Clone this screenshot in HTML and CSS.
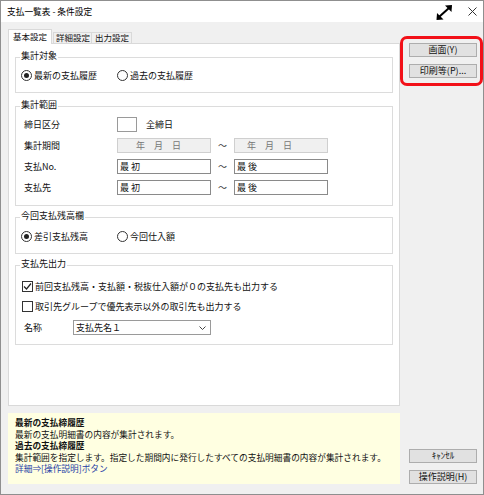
FILE: index.html
```html
<!DOCTYPE html>
<html lang="ja">
<head>
<meta charset="utf-8">
<title>支払一覧表 - 条件設定</title>
<link rel="stylesheet" href="styles.css">
</head>
<body>
<div class="win">
  <div class="titlebar">
    <span class="title">支払一覧表 - 条件設定</span>
    <div class="winctl">
      <svg class="ico-max" width="17" height="15" viewBox="0 0 17 15">
        <line x1="3.5" y1="11.5" x2="13" y2="3" stroke="#000" stroke-width="2"/>
        <polygon points="16,0 9,0.5 15.5,7" fill="#000"/>
        <polygon points="0.5,15 7.5,14.5 1,8" fill="#000"/>
      </svg>
      <svg class="ico-close" width="9" height="9" viewBox="0 0 9 9">
        <path d="M0.5 0.5 L8.5 8.5 M8.5 0.5 L0.5 8.5" stroke="#333" stroke-width="1"/>
      </svg>
    </div>
  </div>
  <div class="client">
    <div class="main">
      <div class="tabs">
        <div class="tab active">基本設定</div>
        <div class="tab">詳細設定</div>
        <div class="tab t3">出力設定</div>
      </div>
      <div class="panel">
        <div class="group g1">
          <div class="legend">集計対象</div>
          <div class="row">
            <div class="opt wide"><span class="radio on"></span>最新の支払履歴</div>
            <div class="opt"><span class="radio"></span>過去の支払履歴</div>
          </div>
        </div>
        <div class="group g2">
          <div class="legend">集計範囲</div>
          <div class="frow first">
            <div class="flabel">締日区分</div>
            <div class="sbox"></div>
            <div class="after">全締日</div>
          </div>
          <div class="frow">
            <div class="flabel">集計期間</div>
            <div class="tbox dis d1">年　月　日</div>
            <div class="tilde">～</div>
            <div class="tbox dis d2">年　月　日</div>
          </div>
          <div class="frow">
            <div class="flabel">支払No.</div>
            <div class="tbox">最 初</div>
            <div class="tilde">～</div>
            <div class="tbox">最 後</div>
          </div>
          <div class="frow">
            <div class="flabel">支払先</div>
            <div class="tbox">最 初</div>
            <div class="tilde">～</div>
            <div class="tbox">最 後</div>
          </div>
        </div>
        <div class="group g3">
          <div class="legend">今回支払残高欄</div>
          <div class="row">
            <div class="opt wide"><span class="radio on"></span>差引支払残高</div>
            <div class="opt"><span class="radio"></span>今回仕入額</div>
          </div>
        </div>
        <div class="group g4">
          <div class="legend">支払先出力</div>
          <div class="row cbrow first">
            <span class="cb"><svg width="9" height="9" viewBox="0 0 9 9"><path d="M1 4.5 L3.5 7 L8 1.5" fill="none" stroke="#222" stroke-width="1.2"/></svg></span>前回支払残高・支払額・税抜仕入額が０の支払先も出力する
          </div>
          <div class="row cbrow">
            <span class="cb"></span>取引先グループで優先表示以外の取引先も出力する
          </div>
          <div class="frow namerow">
            <div class="nlabel">名称</div>
            <div class="select">
              <span>支払先名１</span>
              <svg width="7" height="4" viewBox="0 0 7 4"><path d="M0.5 0.5 L3.5 3.5 L6.5 0.5" fill="none" stroke="#444" stroke-width="1"/></svg>
            </div>
          </div>
        </div>
      </div>
      <div class="info">
        <div class="b">最新の支払締履歴</div>
        <div>最新の支払明細書の内容が集計されます。</div>
        <div class="b">過去の支払締履歴</div>
        <div>集計範囲を指定します。指定した期間内に発行したすべての支払明細書の内容が集計されます。</div>
        <div class="link">詳細⇒[操作説明]ボタン</div>
      </div>
    </div>
    <div class="side">
      <div class="btns">
        <div class="btn">画面(Y)</div>
        <div class="btn">印刷等(P)...</div>
      </div>
      <div class="btns">
        <div class="btn">ｷｬﾝｾﾙ</div>
        <div class="btn">操作説明(H)</div>
      </div>
    </div>
  </div>
  <div class="highlight"></div>
</div>
</body>
</html>
```

FILE: styles.css
```css
* { box-sizing: border-box; }
html, body { margin: 0; padding: 0; }
body {
  width: 484px;
  height: 495px;
  overflow: hidden;
  background: #fff;
  font-family: "Noto Sans CJK JP", "Noto Sans", sans-serif;
  font-size: 9px;
  color: #111;
}
.win {
  position: relative;
  width: 484px;
  height: 495px;
  border: 1px solid #8f8f8f;
  background: #f0f0f0;
  display: flex;
  flex-direction: column;
}
.titlebar {
  height: 21px;
  flex: none;
  background: #fff;
  display: flex;
  align-items: center;
  padding-left: 6px;
  padding-right: 6px;
}
.title { font-size: 8.7px; color: #000; }
.winctl {
  margin-left: auto;
  display: flex;
  align-items: center;
  gap: 15px;
}
.ico-max { margin-top: 1px; }
.client {
  flex: 1;
  display: flex;
  padding: 7px 0 10px 7px;
}
.main {
  width: 392px;
  display: flex;
  flex-direction: column;
}
.tabs {
  height: 14px;
  display: flex;
  align-items: flex-end;
  position: relative;
  z-index: 1;
  font-size: 8.5px;
}
.tab {
  height: 11px;
  line-height: 9px;
  padding: 0 1px 0 2px;
  border: 1px solid #d9d9d9;
  border-bottom: none;
  background: #f0f0f0;
  white-space: nowrap;
}
.tab.active {
  height: 15px;
  line-height: 13px;
  padding: 0 4px;
  margin-bottom: -1px;
  margin-right: 1px;
  background: #fff;
}
.tab.t3 { margin-left: -1px; padding: 0 2px 0 3px; }
.panel {
  height: 363px;
  background: #fff;
  border: 1px solid #d9d9d9;
  padding: 13px 6px 0 6px;
}
.group {
  border: 1px solid #dcdcdc;
  padding: 0 6px 10px 5px;
}
.g2 { margin-top: 13px; }
.g3 { margin-top: 11px; }
.g4 { margin-top: 11px; padding-bottom: 9px; }
.legend {
  margin-top: -8px;
  margin-left: -1px;
  width: fit-content;
  height: 12px;
  line-height: 12px;
  padding: 0 1px;
  background: #fff;
}
.row {
  display: flex;
  align-items: center;
  height: 13px;
  margin-top: 7px;
  white-space: nowrap;
}
.g3 .row { margin-top: 8px; }
.opt {
  display: flex;
  align-items: center;
}
.opt.wide { width: 96px; }
.radio {
  position: relative;
  width: 11px;
  height: 11px;
  border: 1px solid #333;
  border-radius: 50%;
  background: #fff;
  margin-right: 2px;
  flex: none;
}
.radio.on::after {
  content: "";
  position: absolute;
  left: 2px;
  top: 2px;
  width: 5px;
  height: 5px;
  border-radius: 50%;
  background: #222;
}
.frow {
  display: flex;
  align-items: center;
  height: 15px;
  margin-top: 6px;
}
.flabel {
  width: 96px;
  padding-left: 3px;
}
.sbox {
  width: 20px;
  height: 15px;
  border: 1px solid #9a9a9a;
  background: #fff;
}
.after { margin-left: 9px; }
.tbox {
  width: 94px;
  height: 15px;
  border: 1px solid #8a8a8a;
  background: #fff;
  line-height: 13px;
  padding-left: 2px;
  white-space: nowrap;
}
.tbox.dis {
  background: #f0f0f0;
  border-color: #cfcfcf;
  color: #777;
}
.tbox.d1 { padding-left: 18px; }
.tbox.d2 { padding-left: 12px; }
.tilde {
  width: 23px;
  text-align: center;
  color: #333;
}
.cbrow { margin-top: 7px; }
.cbrow.first { margin-top: 10px; }
.cb {
  width: 11px;
  height: 11px;
  border: 1px solid #333;
  background: #fff;
  margin-left: 1px;
  margin-right: 2px;
  flex: none;
  display: flex;
  align-items: center;
  justify-content: center;
}
.namerow { margin-top: 7px; }
.nlabel {
  width: 52px;
  padding-left: 3px;
}
.select {
  width: 138px;
  height: 15px;
  border: 1px solid #9a9a9a;
  background: #fff;
  display: flex;
  align-items: center;
  justify-content: space-between;
  padding: 0 4px 0 2px;
}
.info {
  margin-top: 7px;
  height: 71px;
  background: #ffffe1;
  padding: 4px 7px 0 7px;
  font-size: 8.7px;
  line-height: 11.5px;
  white-space: nowrap;
}
.info .b { font-weight: bold; }
.info .link { color: #1f3ea6; }
.side {
  flex: 1;
  display: flex;
  flex-direction: column;
  justify-content: space-between;
  padding: 14px 6px 0 9px;
}
.btns {
  display: flex;
  flex-direction: column;
  gap: 7px;
}
.btn {
  width: 68px;
  height: 14px;
  border: 1px solid #adadad;
  background: #e1e1e1;
  text-align: center;
  line-height: 12px;
  white-space: nowrap;
}
.highlight {
  position: absolute;
  left: 399px;
  top: 35px;
  width: 83px;
  height: 50px;
  border: 3px solid #f21018;
  border-radius: 7px;
}
```
